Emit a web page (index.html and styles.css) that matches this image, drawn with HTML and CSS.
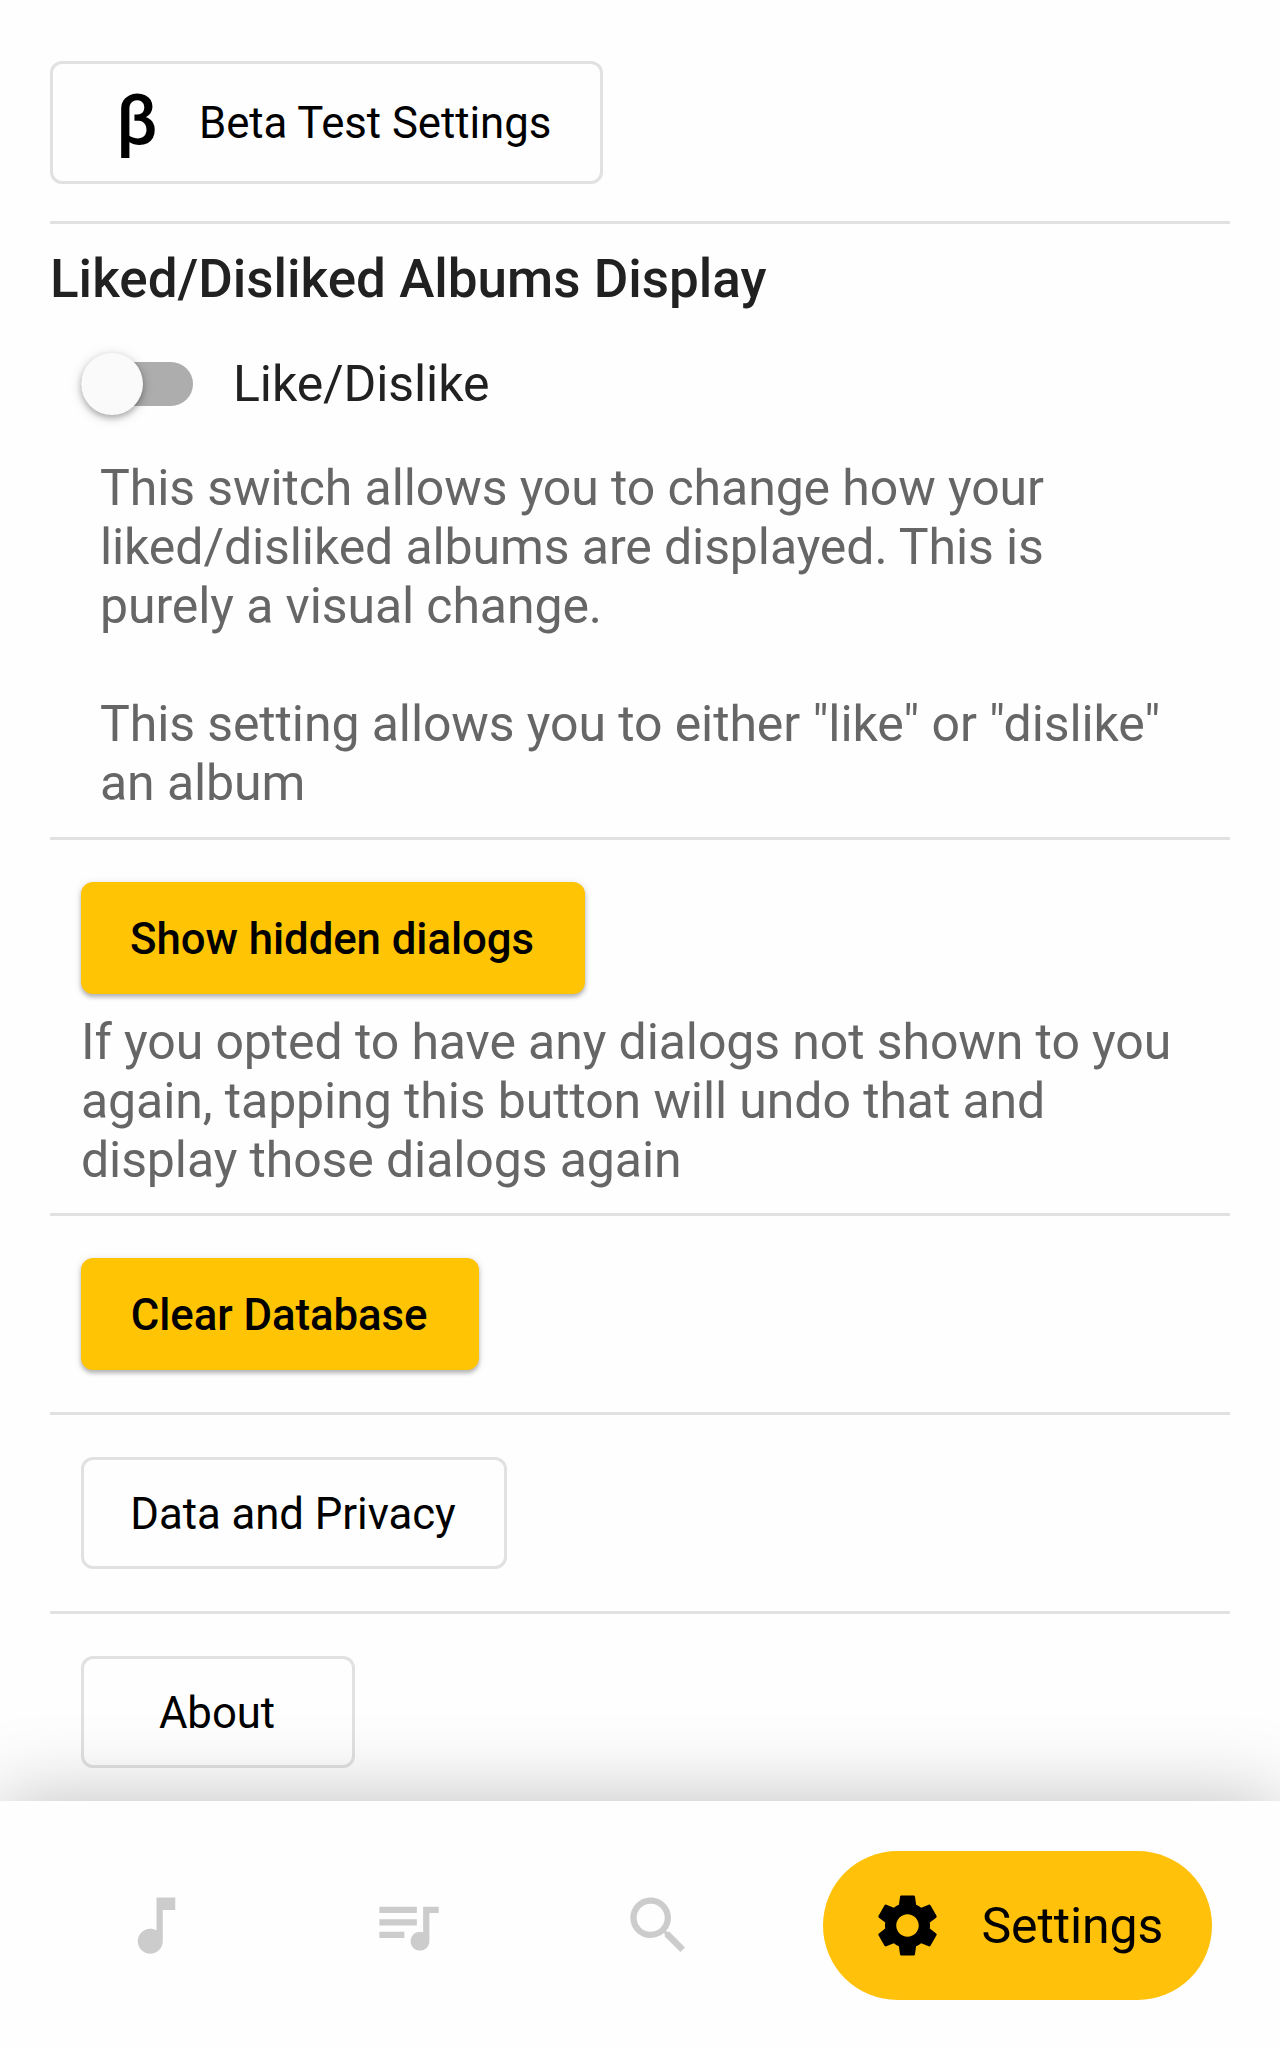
FILE: index.html
```html
<!DOCTYPE html>
<html lang="en">
<head>
<meta charset="utf-8">
<title>Settings</title>
<link rel="stylesheet" href="styles.css">
</head>
<body>
<div class="app">
  <main class="settings">
    <button class="btn btn-outline btn-beta"><span class="beta">β</span><span class="beta-label">Beta Test Settings</span></button>
    <section class="section section-display">
      <h2 class="heading">Liked/Disliked Albums Display</h2>
      <div class="switch-row">
        <span class="switch"><span class="thumb"></span></span>
        <span class="switch-label">Like/Dislike</span>
      </div>
      <p class="copy copy-inset">This switch allows you to change how your<br>liked/disliked albums are displayed. This is<br>purely a visual change.<br><br>This setting allows you to either "like" or "dislike"<br>an album</p>
    </section>
    <section class="section section-dialogs">
      <button class="btn btn-filled btn-show">Show hidden dialogs</button>
      <p class="copy">If you opted to have any dialogs not shown to you<br>again, tapping this button will undo that and<br>display those dialogs again</p>
    </section>
    <section class="section section-action">
      <button class="btn btn-filled btn-clear">Clear Database</button>
    </section>
    <section class="section section-action">
      <button class="btn btn-outline btn-data">Data and Privacy</button>
    </section>
    <section class="section section-action">
      <button class="btn btn-outline btn-about">About</button>
    </section>
  </main>
  <nav class="nav">
    <a class="nav-item"><svg class="icon" viewBox="0 0 24 24"><path d="M12 3v10.55c-.59-.34-1.27-.55-2-.55-2.21 0-4 1.79-4 4s1.79 4 4 4 4-1.79 4-4V7h4V3h-6z"/></svg></a>
    <a class="nav-item"><svg class="icon" viewBox="0 0 24 24"><path d="M15 6H3v2h12V6zm0 4H3v2h12v-2zM3 16h8v-2H3v2zM17 6v8.18c-.31-.11-.65-.18-1-.18-1.66 0-3 1.34-3 3s1.34 3 3 3 3-1.34 3-3V8h3V6h-5z"/></svg></a>
    <a class="nav-item"><svg class="icon" viewBox="0 0 24 24"><path d="M15.5 14h-.79l-.28-.27C15.41 12.59 16 11.11 16 9.5 16 5.91 13.09 3 9.5 3S3 5.91 3 9.5 5.91 16 9.5 16c1.61 0 3.09-.59 4.23-1.57l.27.28v.79l5 4.99L20.49 19l-4.99-5zm-6 0C7.01 14 5 11.99 5 9.5S7.01 5 9.5 5 14 7.01 14 9.5 11.99 14 9.5 14z"/></svg></a>
    <a class="nav-item nav-active"><svg class="icon" viewBox="0 0 24 24"><path d="M19.14 12.94c.04-.3.06-.61.06-.94 0-.32-.02-.64-.07-.94l2.03-1.58c.18-.14.23-.41.12-.61l-1.92-3.32c-.12-.22-.37-.29-.59-.22l-2.39.96c-.5-.38-1.03-.7-1.62-.94l-.36-2.54c-.04-.24-.24-.41-.48-.41h-3.84c-.24 0-.43.17-.47.41l-.36 2.54c-.59.24-1.13.57-1.62.94l-2.39-.96c-.22-.08-.47 0-.59.22L2.74 8.87c-.12.21-.08.47.12.61l2.03 1.58c-.05.3-.09.63-.09.94s.02.64.07.94l-2.03 1.58c-.18.14-.23.41-.12.61l1.92 3.32c.12.22.37.29.59.22l2.39-.96c.5.38 1.03.7 1.62.94l.36 2.54c.05.24.24.41.48.41h3.84c.24 0 .44-.17.47-.41l.36-2.54c.59-.24 1.13-.56 1.62-.94l2.39.96c.22.08.47 0 .59-.22l1.92-3.32c.12-.22.07-.47-.12-.61l-2.01-1.58zM12 15.6c-1.98 0-3.6-1.62-3.6-3.6s1.62-3.6 3.6-3.6 3.6 1.62 3.6 3.6-1.62 3.6-3.6 3.6z"/></svg><span class="nav-label">Settings</span></a>
  </nav>
</div>
</body>
</html>
```
FILE: styles.css
```css
* { box-sizing: border-box; }
body {
  margin: 0;
  background: #fefefe;
  font-family: Roboto, "Liberation Sans", sans-serif;
  font-size: 50px;
  color: #212121;
}
.app {
  display: flex;
  flex-direction: column;
  height: 2048px;
  overflow: hidden;
}
.settings {
  flex: 1;
  min-height: 0;
  padding: 61px 50px 0;
}
.btn {
  display: flex;
  align-items: center;
  justify-content: center;
  height: 112px;
  margin: 0;
  padding: 1px 2px 0 0;
  border: 0;
  border-radius: 12px;
  font-family: inherit;
  font-size: 43.75px;
  line-height: 60px;
  letter-spacing: -0.06px;
  color: #000;
  white-space: nowrap;
}
.btn-outline {
  background: transparent;
  border: 3px solid #e1e1e1;
}
.btn-filled {
  background: #ffc403;
  font-weight: 500;
  box-shadow: 0 3px 4px rgba(0, 0, 0, 0.26), 0 1px 8px rgba(0, 0, 0, 0.1);
}
.btn-beta {
  width: 553px;
  height: 123px;
  justify-content: flex-start;
  padding-left: 63px;
}
.beta {
  width: 83px;
  padding-bottom: 6px;
  font-size: 70px;
  font-weight: 500;
  text-align: left;
}
.btn-show { width: 504px; }
.btn-clear { width: 398px; }
.btn-data { width: 426px; }
.btn-about { width: 274px; }
.section { border-top: 3px solid #e1e1e1; }
.section-display {
  height: 616px;
  margin-top: 37px;
}
.heading {
  margin: 24px 0 0;
  font-size: 53px;
  font-weight: 500;
  line-height: 62px;
}
.switch-row {
  display: flex;
  align-items: center;
  height: 64px;
  margin: 42px 0 0 31px;
}
.switch {
  display: flex;
  align-items: center;
  width: 112px;
  height: 44px;
  border-radius: 22px;
  background: #adadad;
}
.thumb {
  flex: none;
  width: 62px;
  height: 62px;
  border-radius: 50%;
  background: #fafafa;
  box-shadow: 0 3px 6px rgba(0, 0, 0, 0.28), 0 2px 14px rgba(0, 0, 0, 0.12);
}
.switch-label {
  margin-left: 40px;
  letter-spacing: -0.1px;
}
.copy {
  margin: 19px 0 0;
  line-height: 59.1px;
  letter-spacing: -0.1px;
  color: #666;
  white-space: nowrap;
}
.copy-inset { margin: 43px 0 0 50px; }
.section-dialogs {
  height: 376px;
  padding: 42px 0 0 31px;
}
.section-action {
  height: 199px;
  padding: 42px 0 0 31px;
}
.nav {
  display: flex;
  align-items: center;
  gap: 82px;
  height: 247px;
  padding: 2px 0 0 71.5px;
  background: #fefefe;
  box-shadow: 0 0 76px rgba(0, 0, 0, 0.25);
}
.nav-item {
  display: flex;
  align-items: center;
  height: 149px;
  padding: 0 47px;
  border-radius: 75px;
  fill: #ccc;
}
.icon {
  flex: none;
  width: 75px;
  height: 75px;
}
.nav-active {
  width: 389px;
  margin-left: -2px;
  background: #ffc10a;
  fill: #000;
  color: #000;
}
.nav-label {
  margin-left: 37px;
  letter-spacing: -0.1px;
}
```
